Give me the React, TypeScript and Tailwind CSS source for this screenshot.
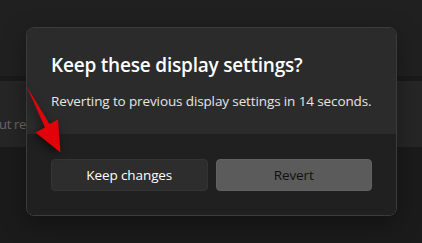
const font = { fontFamily: '"Segoe UI", "Open Sans", "Noto Sans", sans-serif' };

function RedArrow() {
    return (
        <svg
            className="absolute left-0 top-0 pointer-events-none"
            width="80"
            height="170"
            viewBox="0 0 80 170"
            style={{ filter: "drop-shadow(-2px 3px 4px rgba(0,0,0,0.55))" }}
        >
            <polygon
                points="26.5,86 49.5,124 58,119.5 60.5,152.5 35.5,132.5 45,127.5"
                fill="#e10309"
            />
        </svg>
    );
}

export default function App() {
    return (
        <div className="relative w-[422px] h-[243px] overflow-hidden bg-[#1b1b1b]" style={font}>
            {/* Settings page behind the dialog */}
            <div className="h-[76px] bg-[#202020]" />
            <div className="h-[5px] bg-[#1a1a1a]" />
            <div className="h-[66px] bg-[#262626] flex items-center pt-[22px]">
                <span className="-ml-[1px] text-[13px] tracking-[-0.3px] text-[#6a6a6a] whitespace-nowrap">ut refresh rate</span>
            </div>

            {/* Dialog */}
            <div className="absolute left-[26px] top-[27px] w-[371px] rounded-[8px] border border-[#3b3b3b] overflow-hidden shadow-[0_8px_24px_rgba(0,0,0,0.35)]">
                <div className="bg-[#2b2b2b] px-[24px] pt-[23px] pb-[23px]">
                    <h1 className="text-[19px] leading-[28px] font-semibold tracking-[-0.2px] text-white whitespace-nowrap">
                        Keep these display settings?
                    </h1>
                    <p className="mt-[12px] text-[13.5px] leading-[20px] tracking-[-0.12px] text-[#e6e6e6] whitespace-nowrap">
                        Reverting to previous display settings in 14 seconds.
                    </p>
                </div>
                <div className="bg-[#202020] px-[24px] pt-[25px] pb-[24px] grid grid-cols-2 gap-[8px]">
                    <button className="h-[32px] rounded-[4px] bg-[#2d2d2d] border border-[#343434] text-[13.5px] tracking-[-0.1px] text-white">
                        Keep changes
                    </button>
                    <button className="h-[32px] rounded-[4px] bg-[#5b5b5b] border border-[#616161] text-[13.5px] tracking-[-0.1px] text-[#111111]">
                        Revert
                    </button>
                </div>
            </div>

            <RedArrow />
        </div>
    );
}
